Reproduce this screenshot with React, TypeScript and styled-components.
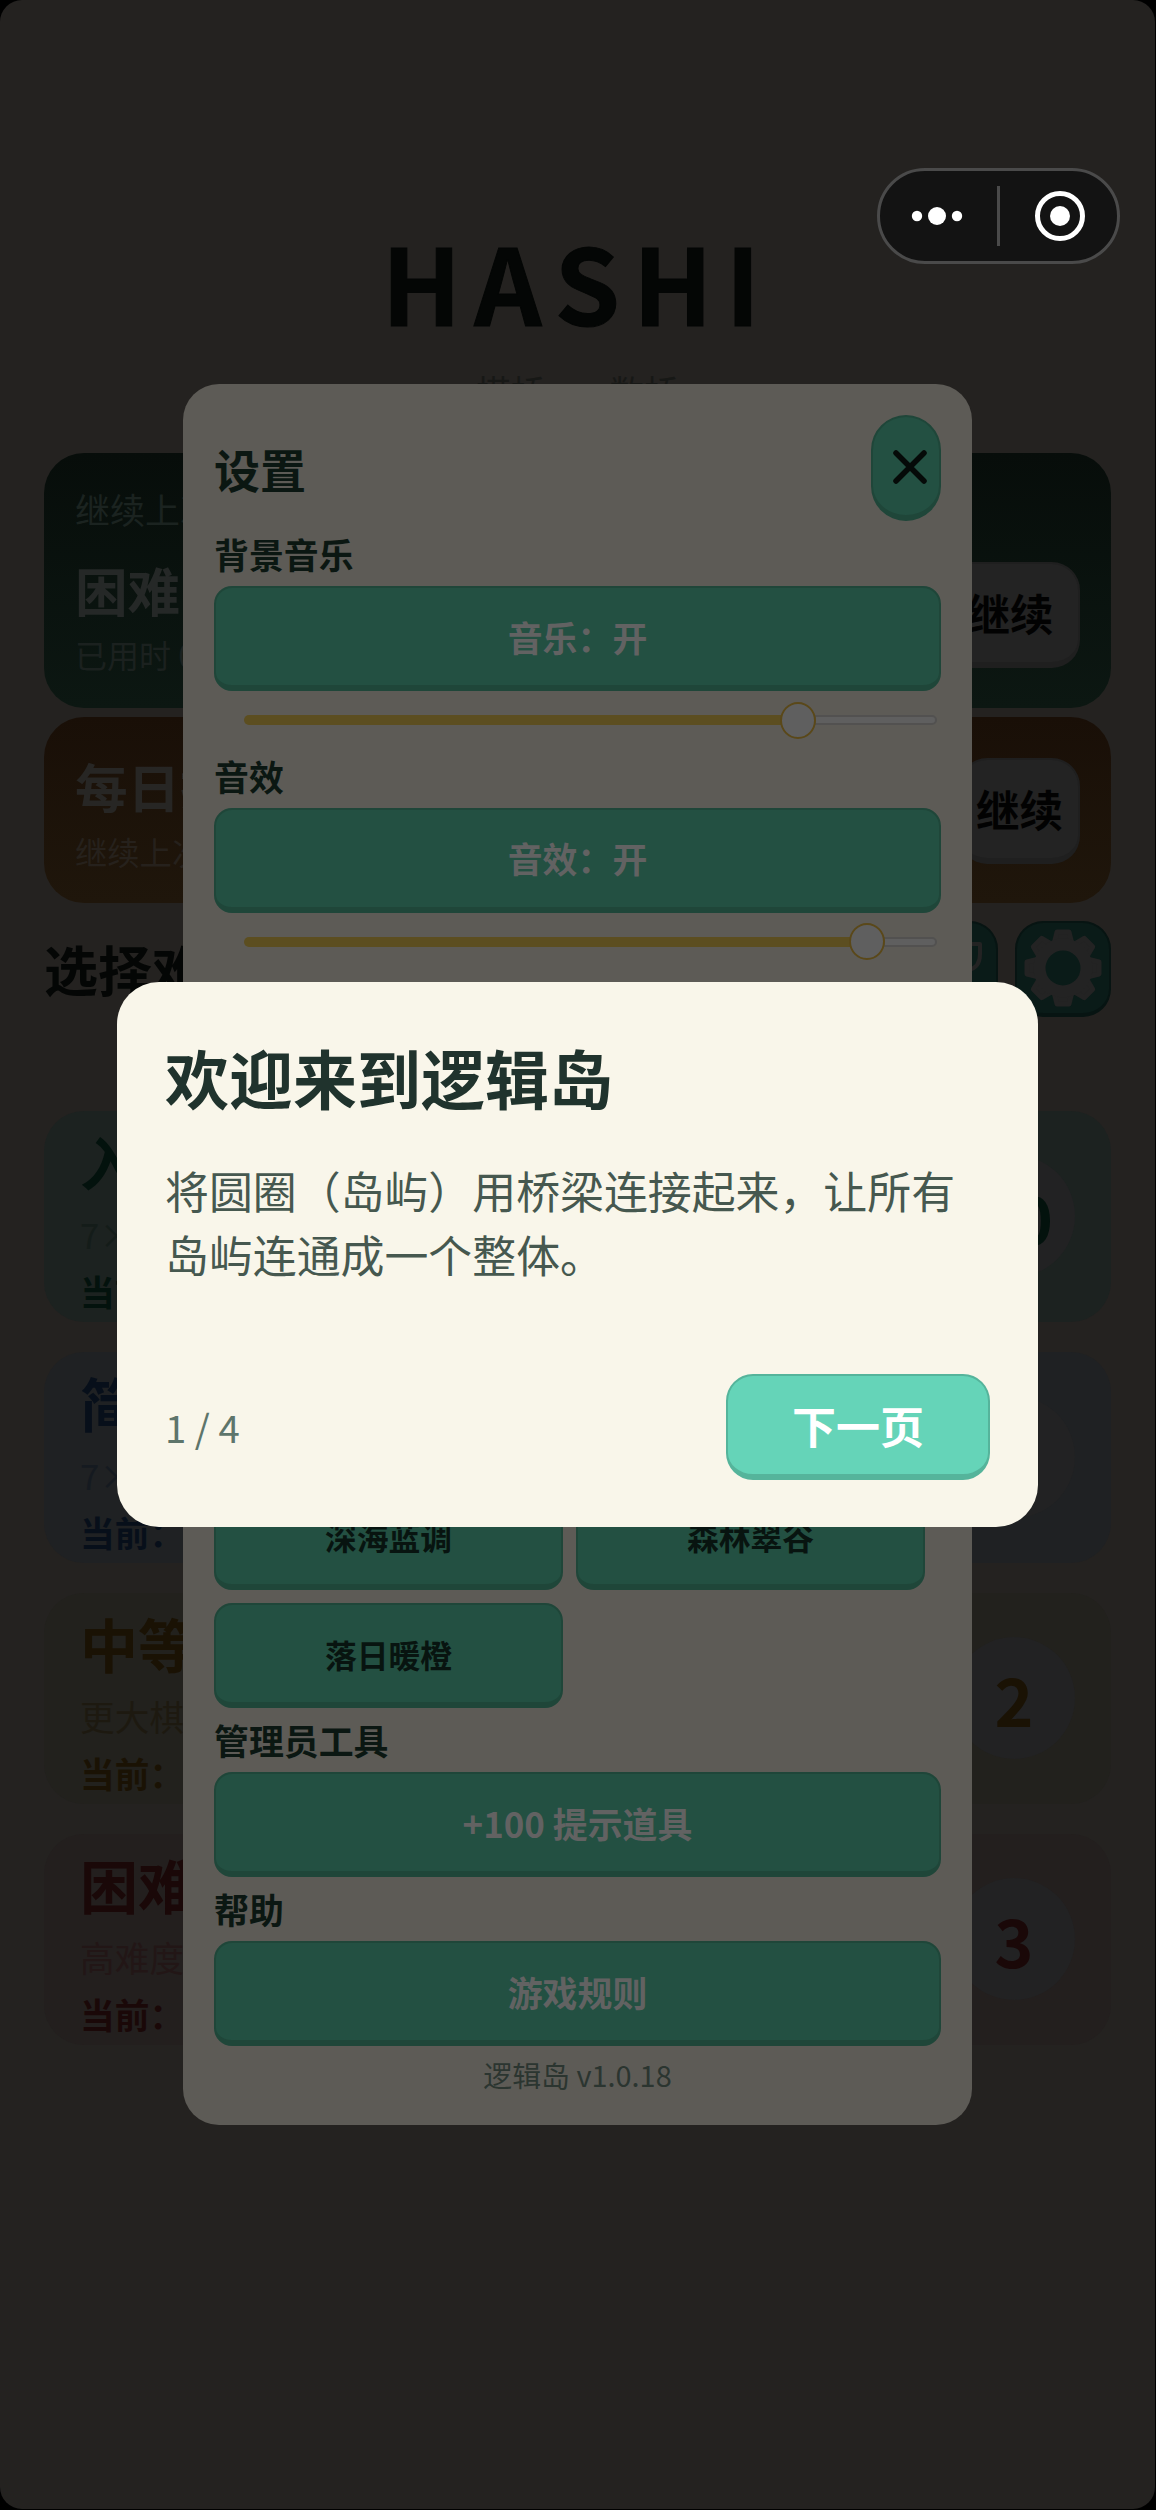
import React from "react";
import styled, { createGlobalStyle } from "styled-components";

const GlobalStyle = createGlobalStyle`
  * { box-sizing: border-box; }
  body { margin: 0; background: #000; }
  button { font: inherit; margin: 0; padding: 0; }
`;

const Screen = styled.div`
  display: grid;
  position: relative;
  width: 1155px;
  height: 2509px;
  overflow: hidden;
  border-radius: 22px;
  background: #242220;
  font-family: "Noto Sans CJK SC", "Noto Sans", sans-serif;
`;

const Layer = styled.div`
  grid-area: 1 / 1;
  z-index: ${(p: { $z?: number }) => p.$z ?? 0};
  min-width: 0;
`;

/* ---------- home ---------- */

const Home = styled(Layer)`
  display: flex;
  flex-direction: column;
  padding: 205px 44px 0;
`;

const Logo = styled.h1`
  margin: 0;
  height: 150px;
  line-height: 151px;
  text-align: center;
  font-size: 105px;
  font-weight: 700;
  letter-spacing: 13px;
  -webkit-text-stroke: 1px #040605;
  color: #040605;
`;

const Tagline = styled.div`
  margin-bottom: 37.5px;
  height: 60px;
  padding-top: 6px;
  line-height: 60px;
  text-align: center;
  font-size: 34.7px;
  word-spacing: 7px;
  color: #171816;
`;

const ResumeCard = styled.section<{ $from: string; $to: string; $h: number }>`
  display: flex;
  justify-content: space-between;
  height: ${(p) => p.$h}px;
  margin-bottom: 9px;
  padding: 0 31px 0 31px;
  border-radius: 40px;
  background: linear-gradient(${(p) => p.$from}, ${(p) => p.$to});
`;

const ResumeText = styled.div<{ $top: number }>`
  display: flex;
  flex-direction: column;
  padding-top: ${(p) => p.$top}px;
  white-space: nowrap;
`;

const Line = styled.div<{ $size: number; $h: number; $color: string; $bold?: boolean }>`
  height: ${(p) => p.$h}px;
  line-height: ${(p) => p.$h}px;
  font-size: ${(p) => p.$size}px;
  font-weight: ${(p) => (p.$bold ? 700 : 400)};
  color: ${(p) => p.$color};
  white-space: nowrap;
`;

const ResumeButton = styled.button<{ $w: number; $top: number }>`
  width: ${(p) => p.$w}px;
  height: 105.5px;
  margin-top: ${(p) => p.$top}px;
  border: 2px solid #1f1f1f;
  border-bottom-width: 6px;
  border-radius: 28px;
  background: #232323;
  color: #020202;
  font-size: 43.5px;
  font-weight: 700;
  line-height: 92px;
`;

const LevelHeader = styled.div`
  display: flex;
  align-items: center;
  gap: 17px;
  height: 96px;
  margin: 9px 0 94px;
`;

const LevelHeading = styled.h2`
  flex: 1;
  margin: 0;
  font-size: 54px;
  line-height: 96px;
  font-weight: 700;
  color: #040605;
`;

const IconButton = styled.button`
  display: grid;
  place-items: center;
  width: 96px;
  height: 96px;
  border: 2px solid #071412;
  border-bottom-width: 4px;
  border-radius: 28px;
  background: #0a1b18;
`;

const Levels = styled.div`
  display: grid;
  gap: 30px;
`;

const LevelCard = styled.article<{ $bg: string }>`
  display: flex;
  align-items: center;
  justify-content: space-between;
  height: 211px;
  padding: 0 36px;
  border-radius: 40px;
  background: ${(p) => p.$bg};
`;

const LevelText = styled.div`
  height: 211px;
  padding-top: 10px;
`;

const Count = styled.div<{ $color: string }>`
  width: 122px;
  height: 122px;
  border-radius: 61px;
  background: #222223;
  color: ${(p) => p.$color};
  text-align: center;
  font-size: 66px;
  line-height: 123px;
  font-weight: 700;
`;

/* ---------- mini program capsule ---------- */

const Capsule = styled.div`
  position: absolute;
  z-index: 5;
  top: 168px;
  right: 35px;
  display: flex;
  align-items: center;
  width: 243px;
  height: 96px;
  border: 3px solid #4a4a4a;
  border-radius: 48px;
  background: #131313;
`;

const CapsuleHalf = styled.div<{ $before?: number; $after?: number }>`
  flex: 1;
  display: grid;
  place-items: center;
  padding: 0 ${(p) => p.$after ?? 0}px 0 ${(p) => p.$before ?? 0}px;
`;

const CapsuleRule = styled.div`
  width: 3px;
  height: 60px;
  background: #4a4a4a;
`;

/* ---------- settings ---------- */

const SettingsLayer = styled(Layer)`
  padding: 384px 0 0 183px;
`;

const Panel = styled.section`
  width: 789px;
  height: 1741px;
  padding: 31px 31px 0;
  border-radius: 36px;
  background: #5d5b56;
`;

const PanelHeader = styled.header`
  display: flex;
  justify-content: space-between;
  height: 107px;
`;

const PanelTitle = styled.h2`
  margin: 0;
  font-size: 46px;
  line-height: 106px;
  font-weight: 700;
  color: #0b1712;
`;

const Close = styled.button`
  display: grid;
  place-items: center;
  width: 70px;
  height: 106px;
  padding: 2px 0 0 7px;
  border: 2px solid #1f4639;
  border-bottom-width: 6px;
  border-radius: 35px;
  background: #235042;
`;

const Label = styled.h3`
  margin: 0;
  height: 64px;
  line-height: 65px;
  font-size: 34.9px;
  font-weight: 700;
  color: #0b1712;
`;

const PanelButton = styled.button<{ $dark?: boolean }>`
  display: block;
  width: 100%;
  height: 105px;
  border: 2px solid #1f4639;
  border-bottom-width: 6px;
  border-radius: 18px;
  background: #235042;
  color: ${(p) => (p.$dark ? "#081410" : "#626262")};
  font-size: ${(p) => (p.$dark ? 31.8 : 34.9)}px;
  font-weight: 700;
  line-height: 96px;
`;

const SliderRow = styled.div`
  display: flex;
  align-items: center;
  height: 52.5px;
  padding: 6px 4px 0 30px;
`;

const Fill = styled.div`
  flex: none;
  height: 10px;
  margin-right: -18px;
  border-radius: 5px 0 0 5px;
  background: #5c4e20;
`;

const Thumb = styled.div`
  flex: none;
  z-index: 1;
  width: 36px;
  height: 37px;
  border: 2px solid #5a4819;
  border-radius: 50%;
  background: #5f5f5f;
`;

const Rest = styled.div`
  flex: 1;
  height: 10px;
  margin-left: -2px;
  border: 2px solid #525150;
  border-radius: 0 5px 5px 0;
  background: #5f5f5f;
`;

const ThemeGrid = styled.div`
  display: grid;
  grid-template-columns: 349px 349px;
  gap: 13px 13px;
`;

const Version = styled.footer`
  height: 56px;
  line-height: 56px;
  text-align: center;
  font-size: 28.9px;
  color: #2b3530;
`;

/* ---------- welcome dialog ---------- */

const DialogLayer = styled(Layer)`
  padding: 981.5px 0 0 117px;
`;

const Dialog = styled.section`
  width: 921px;
  height: 545px;
  padding: 48px 48px 47px;
  display: flex;
  flex-direction: column;
  border-radius: 42px;
  background: #f9f6ea;
`;

const DialogTitle = styled.h2`
  margin: 0 0 36px;
  height: 92px;
  line-height: 92px;
  font-size: 64px;
  font-weight: 700;
  color: #20332d;
`;

const DialogBody = styled.p`
  margin: 0;
  flex: 1;
  font-size: 43.9px;
  line-height: 64.3px;
  color: #46584f;
`;

const DialogFooter = styled.footer`
  display: flex;
  justify-content: space-between;
  align-items: center;
`;

const Page = styled.span`
  font-size: 38.3px;
  line-height: 105px;
  color: #5e756b;
`;

const Next = styled.button`
  width: 264px;
  height: 105.5px;
  border: 2px solid #55b49b;
  border-bottom-width: 6px;
  border-radius: 27px;
  background: #65d4b8;
  color: #fff;
  font-size: 44px;
  font-weight: 700;
  line-height: 98px;
`;

const levels = [
  { name: "入门", desc: "7×7 棋盘", count: "10", bg: "#1c2220", ink: "#03120d", soft: "#141c19" },
  { name: "简单", desc: "7×9 棋盘", count: "5", bg: "#1f2123", ink: "#070f1a", soft: "#151a20" },
  { name: "中等", desc: "更大棋盘", count: "2", bg: "#22211d", ink: "#1a1204", soft: "#1d1910" },
  { name: "困难", desc: "高难度", count: "3", bg: "#231f1e", ink: "#1a0808", soft: "#221616" },
];

const themes = ["薄荷清新", "暖阳米白", "深海蓝调", "森林翠谷", "落日暖橙"];

const GearIcon = () => (
  <svg width="80" height="80" viewBox="-40 -40 80 80">
    <g fill="#232323" stroke="#232323" strokeWidth="5" strokeLinejoin="round">
      {[0, 45, 90, 135, 180, 225, 270, 315].map((a) => (
        <path key={a} d="M-9 -24 L-6 -36 L6 -36 L9 -24 Z" transform={`rotate(${a})`} />
      ))}
    </g>
    <circle r="23.5" fill="none" stroke="#232323" strokeWidth="12" />
  </svg>
);

const TrophyIcon = () => (
  <svg width="68" height="68" viewBox="-34 -34 68 68" fill="none" stroke="#232323" strokeWidth="4" strokeLinecap="round" strokeLinejoin="round">
    <path d="M-18 -28H18V-8a18 18 0 0 1-36 0ZM0 10V24M-14 27H14" />
    <path d="M18 -24H30V-14Q30 0 18 2M-18 -24H-30V-14Q-30 0-18 2" />
  </svg>
);

const Slider = ({ value }: { value: number }) => (
  <SliderRow>
    <Fill style={{ width: value }} />
    <Thumb />
    <Rest />
  </SliderRow>
);

export default function App() {
  return (
    <>
      <GlobalStyle />
      <Screen>
        <Home>
          <Logo>HASHI</Logo>
          <Tagline>搭桥 · 数桥</Tagline>
          <ResumeCard $from="#070d0a" $to="#0c1712" $h={255}>
            <ResumeText $top={26}>
              <Line $size={35} $h={60} $color="#1b2320">继续上次</Line>
              <Line $size={52.6} $h={101} $color="#252827" $bold>困难</Line>
              <Line $size={32} $h={28} $color="#1b211f">已用时 00:12</Line>
            </ResumeText>
            <ResumeButton $w={140} $top={109.5}>继续</ResumeButton>
          </ResumeCard>
          <ResumeCard $from="#190f07" $to="#1f160b" $h={186}>
            <ResumeText $top={28}>
              <Line $size={52.6} $h={81} $color="#272624" $bold>每日挑战</Line>
              <Line $size={32.3} $h={50} $color="#26211c">继续上次</Line>
            </ResumeText>
            <ResumeButton $w={121} $top={41.5}>继续</ResumeButton>
          </ResumeCard>
          <LevelHeader>
            <LevelHeading>选择难度</LevelHeading>
            <IconButton><TrophyIcon /></IconButton>
            <IconButton><GearIcon /></IconButton>
          </LevelHeader>
          <Levels>
            {levels.map((l) => (
              <LevelCard key={l.name} $bg={l.bg}>
                <LevelText>
                  <Line $size={58} $h={80} $color={l.ink} $bold>{l.name}</Line>
                  <Line $size={34.7} $h={66} $color={l.soft}>{l.desc}</Line>
                  <Line $size={34.7} $h={49} $color={l.ink} $bold>当前：</Line>
                </LevelText>
                <Count $color={l.ink}>{l.count}</Count>
              </LevelCard>
            ))}
          </Levels>
        </Home>

        <SettingsLayer $z={1}>
          <Panel>
            <PanelHeader>
              <PanelTitle>设置</PanelTitle>
              <Close>
                <svg width="38" height="38" viewBox="-19 -19 38 38" stroke="#050a08" strokeWidth="5.5" strokeLinecap="round">
                  <path d="M-14 -14L14 14M14 -14L-14 14" />
                </svg>
              </Close>
            </PanelHeader>
            <Label>背景音乐</Label>
            <PanelButton>音乐：开</PanelButton>
            <Slider value={554} />
            <Label>音效</Label>
            <PanelButton>音效：开</PanelButton>
            <Slider value={623} />
            <Label>视图</Label>
            <PanelButton>简体中文</PanelButton>
            <Label>震动</Label>
            <PanelButton>震动：开</PanelButton>
            <Label>主题</Label>
            <ThemeGrid>
              {themes.map((t) => (
                <PanelButton key={t} $dark>{t}</PanelButton>
              ))}
            </ThemeGrid>
            <Label>管理员工具</Label>
            <PanelButton>+100 提示道具</PanelButton>
            <Label>帮助</Label>
            <PanelButton>游戏规则</PanelButton>
            <Version>逻辑岛 v1.0.18</Version>
          </Panel>
        </SettingsLayer>

        <DialogLayer $z={2}>
          <Dialog>
            <DialogTitle>欢迎来到逻辑岛</DialogTitle>
            <DialogBody>将圆圈（岛屿）用桥梁连接起来，让所有岛屿连通成一个整体。</DialogBody>
            <DialogFooter>
              <Page>1 / 4</Page>
              <Next>下一页</Next>
            </DialogFooter>
          </Dialog>
        </DialogLayer>

        <Capsule>
          <CapsuleHalf $after={3}>
            <svg width="52" height="20" viewBox="-26 -10 52 20" fill="#fff">
              <circle r="9" />
              <circle cx="-20" r="5.2" />
              <circle cx="20" r="5.2" />
            </svg>
          </CapsuleHalf>
          <CapsuleRule />
          <CapsuleHalf $before={3}>
            <svg width="52" height="52" viewBox="-26 -26 52 52">
              <circle r="22.5" fill="none" stroke="#fff" strokeWidth="5" />
              <circle r="10" fill="#fff" />
            </svg>
          </CapsuleHalf>
        </Capsule>
      </Screen>
    </>
  );
}
